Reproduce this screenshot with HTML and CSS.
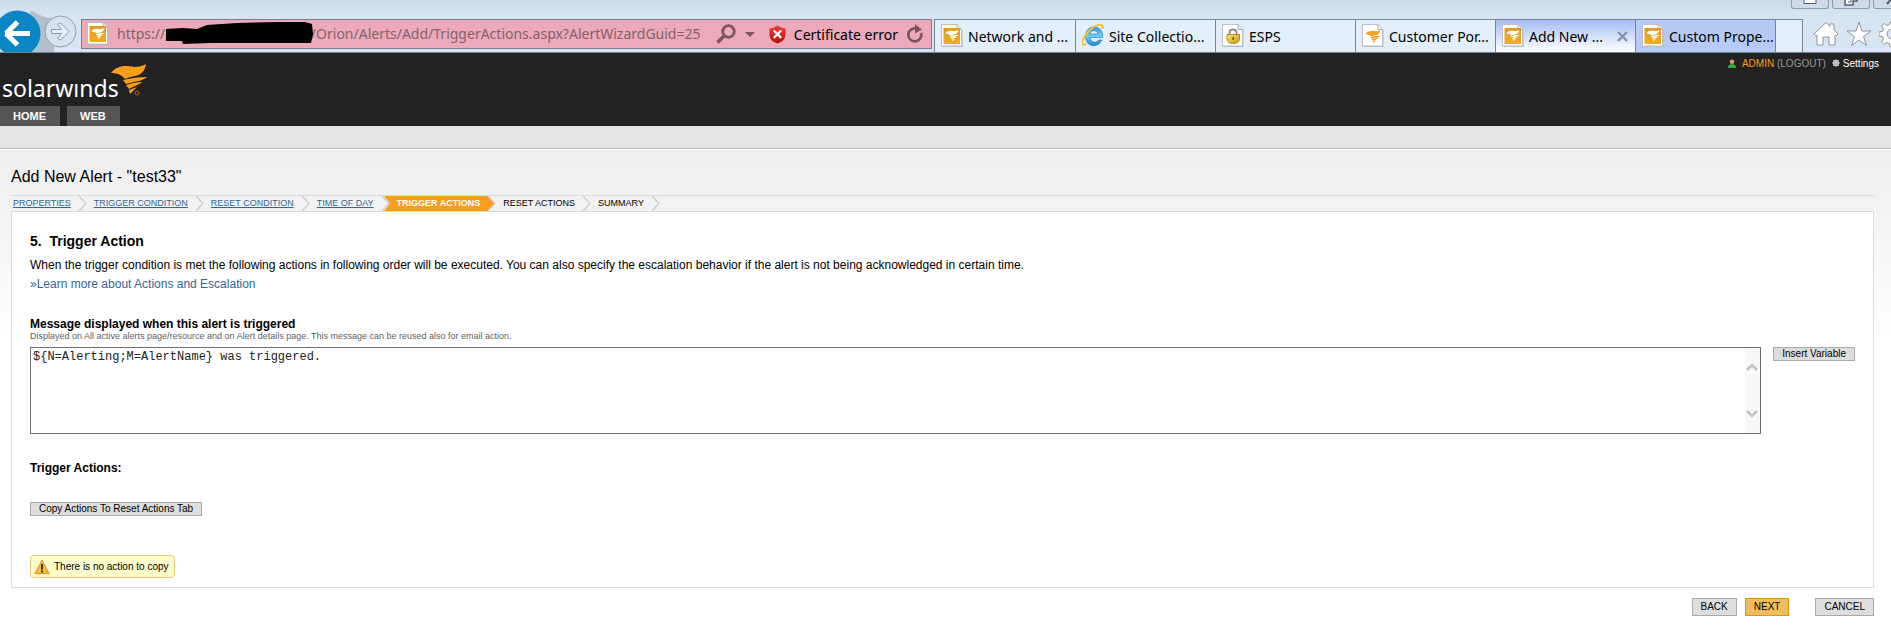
FILE: index.html
```html
<!DOCTYPE html>
<html lang="en">
<head>
<meta charset="utf-8">
<title>Add New Alert</title>
<link rel="stylesheet" href="styles.css">
</head>
<body>
<svg class="defs" aria-hidden="true">
  <defs>
    <linearGradient id="amber" x1="0" y1="0" x2="0" y2="1"><stop offset="0" stop-color="#e09a2c"/><stop offset="1" stop-color="#f4ab1c"/></linearGradient>
    <linearGradient id="ieblue" x1="0" y1="0" x2="0" y2="1"><stop offset="0" stop-color="#2f9be0"/><stop offset=".5" stop-color="#6fd0f7"/><stop offset="1" stop-color="#1c86cf"/></linearGradient>
    <linearGradient id="gold" x1="0" y1="0" x2="1" y2="1"><stop offset="0" stop-color="#fbe56a"/><stop offset="1" stop-color="#c99a12"/></linearGradient>
    <linearGradient id="shieldred" x1="0" y1="0" x2="0" y2="1"><stop offset="0" stop-color="#ee3a35"/><stop offset="1" stop-color="#b8120f"/></linearGradient>
    <symbol id="page" viewBox="0 0 22 24">
      <path d="M1 1h16l4.500 5v17H1z" fill="#b4b9c0"/>
      <path d="M.5 .5H16l4.500 5V22H.5z" fill="#fff" stroke="#bcc0c6"/>
      <path d="M16 .5v5h4.500" fill="#eee" stroke="#a8adb4"/>
    </symbol>
    <symbol id="flame" viewBox="0 0 36 32">
      <path d="M0 9C4 4 9 2 14 2c3 0 5 1 8 0-1 1-1 1 0 1 6 0 10-1 13-3-1 7-5 11-11 12-5 1-8 2-10 3C11 11 6 9 0 9z"/>
      <path d="M12 16c8-2 16-3 24-3-4 4-11 4-21 7z"/>
      <path d="M15 21c6-2 11-3 16-3-3 3-8 4-13 7z"/>
      <path d="M18 26l8-3-7 7z"/>
    </symbol>
    <symbol id="favicon" viewBox="0 0 22 24">
      <use href="#page" width="22" height="24"/>
      <rect x="2.500" y="4" width="16.500" height="16" fill="url(#amber)"/>
      <use href="#flame" x="4" y="6" width="14" height="12" fill="#fff"/>
    </symbol>
  </defs>
</svg>

<header class="chrome">
  <div class="window-buttons">
    <button class="window-button" aria-label="Minimize"><svg width="14" height="6" viewBox="0 0 14 6"><path d="M1-2v5.500h12V-2" fill="#fff" stroke="#555d6b"/></svg></button>
    <button class="window-button" aria-label="Restore"><svg width="14" height="6" viewBox="0 0 14 6"><path d="M5-2h8v3H9v4H1V-2z" fill="#fff" stroke="#555d6b" stroke-width="1.500"/><path d="M4 2h3V-1" fill="none" stroke="#555d6b"/></svg></button>
    <button class="window-button window-button-close" aria-label="Close"><svg width="12" height="6" viewBox="0 0 12 6"><path d="M1 4l5-6 5 6" fill="none" stroke="#555d6b" stroke-width="2"/></svg></button>
  </div>
  <div class="toolbar">
    <div class="history">
      <button class="back" aria-label="Back"><svg width="41" height="42" viewBox="0 0 41 42"><path d="M30 1c8 1 12 8 24 7v35H30z" fill="#b3bfcb"/><circle cx="17.500" cy="23.500" r="23" fill="#0a86c4"/><path d="M5 23.500h25M6 23.500L17.500 12M6 23.500L17.500 35" fill="none" stroke="#fff" stroke-width="5"/></svg></button>
      <button class="forward" aria-label="Forward"><svg width="33" height="33" viewBox="0 0 33 33"><circle cx="16.500" cy="16.500" r="15.500" fill="#d6e2ee" stroke="#97a0ac"/><path d="M7.500 14.500h10l-4-5 3-1.500 8.500 8.500-8.500 8.500-3-1.500 4-5h-10z" fill="#e6eef6" stroke="#939ba6"/></svg></button>
    </div>
    <form class="address">
      <svg class="favicon" width="22" height="24"><use href="#favicon"/></svg>
      <label class="url">
        <input class="url-input" type="text" aria-label="Address" value="https://                                        /Orion/Alerts/Add/TriggerActions.aspx?AlertWizardGuid=25">
        <svg class="redaction" width="148" height="23" viewBox="0 0 148 23"><path d="M1 7l17-1 14 1 10-4 30-2 40-1h28l7 2 1 10-2 9H85l-40 0-27 1-1-3H1z"/></svg>
      </label>
      <button type="button" class="bar-button" aria-label="Search"><svg width="20" height="20" viewBox="0 0 20 20"><circle cx="12.500" cy="7.500" r="5.800" fill="none" stroke="#7d5561" stroke-width="2.800"/><path d="M8.500 11.500L1.500 18.500" stroke="#7d5561" stroke-width="3.500"/></svg></button>
      <button type="button" class="bar-button" aria-label="Show address list"><svg width="10" height="20" viewBox="0 0 10 20"><path d="M0 8h10l-5 5z" fill="#7d5561"/></svg></button>
      <button type="button" class="certificate"><svg width="17" height="19" viewBox="0 0 17 19"><path d="M.5 3.500C4 3.500 6 2 8.500.5 11 2 13 3.500 16.500 3.500V9c0 5-3 8-8 9.500C3.500 17 .5 14 .5 9z" fill="url(#shieldred)"/><path d="M4.800 5.500l7.400 7.400M12.200 5.500l-7.400 7.400" stroke="#fff" stroke-width="2.200"/></svg>Certificate error</button>
      <button type="button" class="bar-button" aria-label="Refresh"><svg width="18" height="20" viewBox="0 0 18 20"><path d="M11 4.800A6.500 6.500 0 1 0 15 9" fill="none" stroke="#7d5561" stroke-width="2.800"/><path d="M9 0l7 5.500-7 4z" fill="#7d5561"/></svg></button>
    </form>
    <nav class="tabs" aria-label="Browser tabs">
      <a class="tab" href="#"><svg width="22" height="24"><use href="#favicon"/></svg>Network and ...</a>
      <a class="tab" href="#"><svg width="22" height="24" viewBox="0 0 22 24"><path d="M20.500 13.500H8c.5 5 6 6 8.500 2.500H20c-3.500 8.500-16.500 7.500-16.500-3.500C3.500 3 12 1 17 4.500c3 2 4 5.500 3.500 9zM8 10h8C15.500 5.500 8.500 5.500 8 10z" fill="url(#ieblue)" stroke="#1a77b8" stroke-width=".6"/><path d="M4 20C-4 24 2 11 9 5c6-5 14-6 11 0" fill="none" stroke="#f5c32b" stroke-width="2"/></svg>Site Collectio...</a>
      <a class="tab" href="#"><svg width="22" height="24" viewBox="0 0 22 24"><use href="#page" width="22" height="24"/><path d="M7.500 11V8.500c0-4 7-4 7 0V11" fill="none" stroke="#8a8f96" stroke-width="2"/><path d="M5 10.500h12.500V15c0 6-12.500 6-12.500 0z" fill="url(#gold)" stroke="#b18a1b"/><path d="M11.200 13v3" stroke="#7a5a10" stroke-width="1.500"/></svg>ESPS</a>
      <a class="tab" href="#"><svg width="22" height="24" viewBox="0 0 22 24"><use href="#page" width="22" height="24"/><use href="#flame" x="3" y="6" width="16" height="14" fill="#f9a020"/></svg>Customer Por...</a>
      <a class="tab tab-active" href="#" aria-current="page"><svg width="22" height="24"><use href="#favicon"/></svg>Add New ...<svg class="tab-close" width="11" height="11" viewBox="0 0 11 11"><path d="M1 1l9 9M10 1l-9 9" stroke="#8590a8" stroke-width="2.400"/></svg></a>
      <a class="tab tab-blue" href="#"><svg width="22" height="24"><use href="#favicon"/></svg>Custom Prope...</a>
      <button class="new-tab" aria-label="New tab"></button>
    </nav>
    <div class="tools">
      <button class="bar-button" aria-label="Home"><svg width="26" height="26" viewBox="0 0 26 26"><path d="M13 1.500l4 4V3h4v6l4 4-1.500 1.500H22V24h-6v-8h-6v8H4v-9.500H2.500L1 13z" fill="#fff" stroke="#8f969e"/></svg></button>
      <button class="bar-button" aria-label="Favorites"><svg width="26" height="26" viewBox="0 0 26 26"><path d="M13 1l3 9h9l-7.500 5.500 3 9L13 19l-7.500 5.500 3-9L1 10h9z" fill="#fff" stroke="#8f969e"/></svg></button>
      <button class="bar-button" aria-label="Tools"><svg width="26" height="26" viewBox="0 0 26 26"><path d="M11 1h4l.6 3.500 2.600 1L21 3.500 23.500 6l-2 3 1 2.500L26 12v3l-3.500.6-1 2.500 2 3-2.500 2.500-3-2-2.500 1L15 26h-4l-.6-3.500-2.500-1-3 2L2.500 21l2-3-1-2.500L0 15v-4l3.500-.6 1-2.500-2-3L5 2.500l3 2 2.500-1z" fill="#fff" stroke="#8f969e"/><circle cx="13" cy="13" r="5" fill="#d9e4ef" stroke="#8f969e"/></svg></button>
    </div>
  </div>
</header>

<div class="site-header">
  <div class="brand-row">
    <a class="brand" href="#" aria-label="solarwinds"><span class="brand-name">solarwınds</span><svg class="brand-flame" width="36" height="32" viewBox="0 0 36 32"><use href="#flame" width="36" height="32" fill="#f99d1c"/><circle cx="26" cy="29" r="2" fill="none" stroke="#a86a14"/></svg></a>
    <div class="account">
      <svg width="8" height="9" viewBox="0 0 8 9"><path d="M0 9c0-3 1.500-4 4-4s4 1 4 4z" fill="#3aa844"/><circle cx="4" cy="2.800" r="2.300" fill="#d99a66"/></svg>
      <span class="user"><a class="user-name" href="#">ADMIN</a> <a class="logout" href="#">(LOGOUT)</a></span>
      <a class="settings" href="#"><svg width="8" height="8" viewBox="0 0 8 8"><circle cx="4" cy="4" r="2.300" fill="none" stroke="#ddd" stroke-width="1.500"/><path d="M4 0v8M0 4h8M1 1l6 6M7 1L1 7" stroke="#ccc" stroke-width=".9"/></svg>Settings</a>
    </div>
  </div>
  <nav class="site-nav" aria-label="Main"><a class="site-link" href="#">HOME</a><a class="site-link" href="#">WEB</a></nav>
</div>
<div class="subnav"></div>

<main class="content">
  <h1 class="title">Add New Alert - "test33"</h1>
  <nav class="steps" aria-label="Wizard steps">
    <a class="step" href="#">PROPERTIES</a><svg class="chevron" width="8" height="15" viewBox="0 0 8 15"><path d="M0 0l7 7.500L0 15"/></svg>
    <a class="step" href="#">TRIGGER CONDITION</a><svg class="chevron" width="8" height="15" viewBox="0 0 8 15"><path d="M0 0l7 7.500L0 15"/></svg>
    <a class="step" href="#">RESET CONDITION</a><svg class="chevron" width="8" height="15" viewBox="0 0 8 15"><path d="M0 0l7 7.500L0 15"/></svg>
    <a class="step" href="#">TIME OF DAY</a><svg class="chevron" width="8" height="15" viewBox="0 0 8 15"><path class="chevron-fill" d="M2 0h6v15H2l6-7.500z"/><path d="M0 0l7 7.500L0 15"/></svg>
    <span class="step step-current" aria-current="step">TRIGGER ACTIONS</span><svg class="chevron" width="8" height="15" viewBox="0 0 8 15"><path class="chevron-fill" d="M0 0l7 7.500L0 15z"/><path d="M0 0l7 7.500L0 15"/></svg>
    <span class="step">RESET ACTIONS</span><svg class="chevron" width="8" height="15" viewBox="0 0 8 15"><path d="M0 0l7 7.500L0 15"/></svg>
    <span class="step">SUMMARY</span><svg class="chevron" width="8" height="15" viewBox="0 0 8 15"><path d="M0 0l7 7.500L0 15"/></svg>
  </nav>
  <section class="panel">
    <h2 class="panel-title">5.&nbsp; Trigger Action</h2>
    <p class="text">When the trigger condition is met the following actions in following order will be executed. You can also specify the escalation behavior if the alert is not being acknowledged in certain time.</p>
    <a class="learn" href="#">»Learn more about Actions and Escalation</a>
    <label class="field-label" for="message">Message displayed when this alert is triggered</label>
    <p class="hint">Displayed on All active alerts page/resource and on Alert details page. This message can be reused also for email action.</p>
    <div class="message-row">
      <div class="message-box">
        <textarea class="message" id="message">${N=Alerting;M=AlertName} was triggered.</textarea>
        <div class="scrollbar">
          <svg width="12" height="9" viewBox="0 0 12 9"><path d="M1 8l5-5 5 5"/></svg>
          <svg width="12" height="9" viewBox="0 0 12 9"><path d="M1 1l5 5 5-5"/></svg>
        </div>
      </div>
      <button class="button">Insert Variable</button>
    </div>
    <h3 class="field-label actions-label">Trigger Actions:</h3>
    <button class="button">Copy Actions To Reset Actions Tab</button>
    <p class="notice"><svg width="16" height="16" viewBox="0 0 16 16"><path d="M8 1.500l6.800 13H1.200z" fill="#fcc12c" stroke="#ef9a3a" stroke-width="1.500" stroke-linejoin="round"/><path d="M8 5v5.500M8 11.500v2" stroke="#333" stroke-width="2"/></svg>There is no action to copy</p>
  </section>
  <div class="footer-buttons">
    <button class="button button-large">BACK</button>
    <button class="button button-large button-primary">NEXT</button>
    <button class="button button-large button-cancel">CANCEL</button>
  </div>
</main>
</body>
</html>
```
FILE: styles.css
```css
* { box-sizing: border-box; }
body {
  margin: 0;
  background: #fff;
  color: #000;
  font-family: "Liberation Sans", Arial, sans-serif;
  font-size: 12px;
  overflow-x: hidden;
}
h1, h2, h3, p { margin: 0; }
button { font-family: inherit; padding: 0; color: inherit; }
a { color: inherit; text-decoration: none; }
svg { display: block; flex: none; }
.defs { position: absolute; width: 0; height: 0; }

/* Browser window */
.chrome {
  position: relative;
  padding-top: 10px;
  background: linear-gradient(#cedbe8, #d7e4f1 16px);
  border-bottom: 1px solid #718597;
  font-family: "Noto Sans", "Open Sans", sans-serif;
  font-size: 14px;
  overflow: hidden;
}
.window-buttons {
  position: absolute;
  top: 0;
  right: -20px;
  display: flex;
  gap: 3px;
}
.window-button {
  display: flex;
  justify-content: center;
  width: 38px;
  height: 9px;
  border: 1px solid #8f9cae;
  border-top: 0;
  border-radius: 0 0 3px 3px;
  background: #cfdbe9;
}
.toolbar { display: flex; align-items: flex-end; }
.history { display: flex; align-items: center; width: 81px; flex: none; }
.back, .forward, .bar-button { border: 0; background: none; }
.back svg { overflow: visible; }
.forward { margin-left: 3px; position: relative; }
.address {
  display: flex;
  align-items: center;
  flex: 1;
  min-width: 0;
  height: 30px;
  margin-bottom: 3px;
  padding: 0 7px 0 5px;
  border: 1px solid #718094;
  background: #eba9b9;
}
.url { position: relative; flex: 1; min-width: 0; margin: 0 7px 0 8px; }
.url-input {
  display: block;
  width: 100%;
  padding: 0;
  border: 0;
  outline: 0;
  background: none;
  color: #84646c;
  font: inherit;
  line-height: 24px;
}
.redaction { position: absolute; left: 48px; top: 0; }
.bar-button + .bar-button { margin-left: 9px; }
.certificate {
  display: flex;
  align-items: center;
  gap: 8px;
  margin: 0 8px 0 14px;
  border: 0;
  background: none;
  font-size: 14px;
  white-space: nowrap;
}
.tabs {
  display: flex;
  flex: none;
  height: 33px;
  margin-left: 2px;
  border: 1px solid #718597;
  border-bottom: 0;
  background: #e2eefa;
}
.tab {
  display: flex;
  align-items: center;
  gap: 5px;
  width: 140px;
  padding-left: 6px;
  white-space: nowrap;
  border-right: 1px solid #718597;
}
.tab:first-child { width: 141px; }
.tab-active { background: linear-gradient(#a4bcf4, #fff); }
.tab-close { margin: 0 7px 0 auto; }
.tab-blue { background: #b7caf6; }
.new-tab { width: 26px; border: 0; background: none; }
.tools { display: flex; align-items: center; height: 36px; gap: 7px; width: 88px; padding-left: 10px; flex: none; }
.tools .bar-button { margin: 0; }

/* Site header */
.site-header { background: #222; color: #fff; }
.brand-row { display: flex; justify-content: space-between; height: 53px; padding-right: 12px; }
.brand { display: flex; padding: 11px 0 0 2px; }
.brand-name { padding-top: 8px; font: 23px/32px "Noto Sans", sans-serif; }
.brand-flame { margin-left: -8px; }
.account { display: flex; align-items: center; height: 20px; gap: 6px; font-size: 10px; }
.user { color: #999; }
.user-name { color: #f99d1c; }
.settings { display: flex; align-items: center; gap: 3px; }
.site-nav { display: flex; gap: 7px; }
.site-link {
  padding: 0 14px 0 13px;
  background: #555;
  font-size: 11px;
  font-weight: bold;
  line-height: 20px;
}
.subnav { height: 23px; background: #e5e5e5; border-bottom: 1px solid #b8b8b8; }

/* Wizard */
.content {
  padding: 17px 17px 0 11px;
  border-top: 1px solid #fff;
  background: linear-gradient(#eee, #fff 190px);
}
.title { font-size: 16px; font-weight: normal; line-height: 20px; }
.steps {
  display: flex;
  height: 16px;
  margin-top: 8px;
  border-top: 1px solid #dbdbdb;
  background: #f2f2f2;
  font-size: 9px;
  line-height: 15px;
}
.step { padding: 0 8px 0 7px; white-space: nowrap; }
.step:first-child { padding-left: 2px; }
a.step { color: #336699; text-decoration: underline; }
.step-current { background: #f99d1c; color: #fff; font-weight: bold; }
.chevron path { fill: none; stroke: #d0d0d0; stroke-width: 1.500; }
.chevron .chevron-fill { fill: #f99d1c; stroke: none; }
.panel { padding: 19px 18px 9px; border: 1px solid #dbdbdb; background: #fff; }
.panel-title { font-size: 14px; line-height: 20px; }
.text { margin-top: 5px; line-height: 18px; }
.learn { display: block; width: fit-content; line-height: 20px; color: #336699; }
.field-label { display: block; margin-top: 23px; font-size: 12px; font-weight: bold; line-height: 14px; }
.hint { font-size: 9px; line-height: 10px; color: #5f5f5f; }
.message-row { display: flex; align-items: flex-start; gap: 12px; margin-top: 6px; }
.message-box { position: relative; flex: 1; }
.message {
  display: block;
  width: 100%;
  height: 87px;
  padding: 2px 18px 2px 2px;
  border: 1px solid #707070;
  outline: 0;
  resize: none;
  overflow: hidden;
  color: #222;
  font: 12px/14px "Liberation Mono", "Courier New", monospace;
}
.scrollbar {
  position: absolute;
  top: 1px;
  right: 1px;
  bottom: 1px;
  display: flex;
  flex-direction: column;
  justify-content: space-between;
  width: 15px;
  padding: 14px 1px;
  background: #f8f8f8;
}
.scrollbar path { fill: none; stroke: #c2c2c2; stroke-width: 2.500; }
.button {
  height: 14px;
  padding: 0 8px;
  border: 1px solid #aaa;
  background: #ddd;
  font-size: 10px;
  line-height: 12px;
  white-space: nowrap;
}
.actions-label { margin: 27px 0 26px; }
.notice {
  display: flex;
  align-items: center;
  gap: 4px;
  width: fit-content;
  height: 23px;
  margin-top: 39px;
  padding: 0 5px 0 3px;
  border: 1px solid #e8c87a;
  border-radius: 4px;
  background: #fffccc;
  font-size: 10px;
}
.footer-buttons { display: flex; justify-content: flex-end; gap: 8px; padding: 10px 0 19px; }
.button-large { height: 18px; line-height: 16px; }
.button-primary { border-color: #e0901c; background: #efbd5a; }
.button-cancel { margin-left: 18px; }
```
